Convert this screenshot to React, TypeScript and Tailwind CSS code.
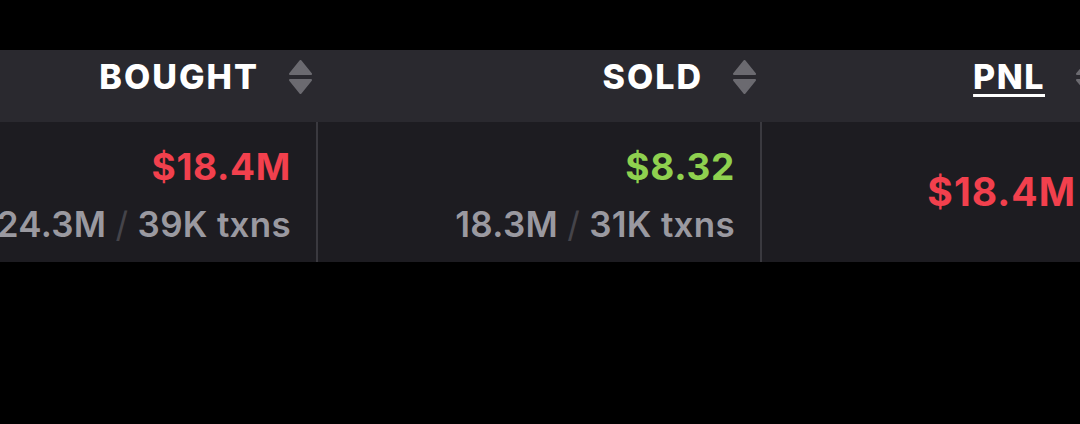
import React from "react";

const SortIcon = () => (
  <svg width="25" height="34" viewBox="0 0 25 34" className="shrink-0">
    <path d="M12.5 1 L23 14 L2 14 Z" fill="#6b6a70" stroke="#6b6a70" strokeWidth="2" strokeLinejoin="round" />
    <path d="M12.5 33 L23 20 L2 20 Z" fill="#6b6a70" stroke="#6b6a70" strokeWidth="2" strokeLinejoin="round" />
  </svg>
);

const font = { fontFamily: "Inter, 'Noto Sans', sans-serif" };

export default function App() {
  return (
    <div className="w-[1080px] h-[424px] bg-black overflow-hidden pt-[50px]" style={font}>
      <div className="flex bg-[#2a292f] h-[72px] w-[1200px]">
        <div className="w-[318px] shrink-0 flex justify-end items-start pt-[10px] pr-[5px] gap-[29px]">
          <span className="text-white font-extrabold text-[34px] leading-[34px] tracking-[2px]">BOUGHT</span>
          <SortIcon />
        </div>
        <div className="w-[444px] shrink-0 flex justify-end items-start pt-[10px] pr-[5px] gap-[29px]">
          <span className="text-white font-extrabold text-[34px] leading-[34px] tracking-[2px]">SOLD</span>
          <SortIcon />
        </div>
        <div className="w-[343px] shrink-0 flex justify-end items-start pt-[10px] pr-[5px] gap-[30px]">
          <span className="text-white font-extrabold text-[34px] leading-[34px] tracking-[1.5px] underline decoration-[3px] underline-offset-[5px]">PNL</span>
          <SortIcon />
        </div>
      </div>
      <div className="flex bg-[#1d1c21] h-[140px] w-[1200px]">
        <div className="w-[318px] shrink-0 border-r-2 border-[#3a393f] flex flex-col items-end justify-start pt-[25px] pr-[25px] whitespace-nowrap">
          <span className="text-[#f2404d] font-bold text-[37px] leading-[40px] tracking-[0.7px]">$18.4M</span>
          <span className="mt-[17px] text-[#9a99a0] font-semibold text-[35px] leading-[40px] tracking-[0.3px]">
            24.3M <span className="text-[#45444a] font-normal">/</span> 39K txns
          </span>
        </div>
        <div className="w-[444px] shrink-0 border-r-2 border-[#3a393f] flex flex-col items-end justify-start pt-[25px] pr-[25px] whitespace-nowrap">
          <span className="text-[#8fd14f] font-bold text-[37px] leading-[40px] tracking-[0.7px]">$8.32</span>
          <span className="mt-[17px] text-[#9a99a0] font-semibold text-[35px] leading-[40px] tracking-[0.3px]">
            18.3M <span className="text-[#45444a] font-normal">/</span> 31K txns
          </span>
        </div>
        <div className="w-[343px] shrink-0 flex items-center justify-end pr-[29px] whitespace-nowrap">
          <span className="text-[#f2404d] font-bold text-[39px] leading-[40px] tracking-[1px]">$18.4M</span>
        </div>
      </div>
    </div>
  );
}
